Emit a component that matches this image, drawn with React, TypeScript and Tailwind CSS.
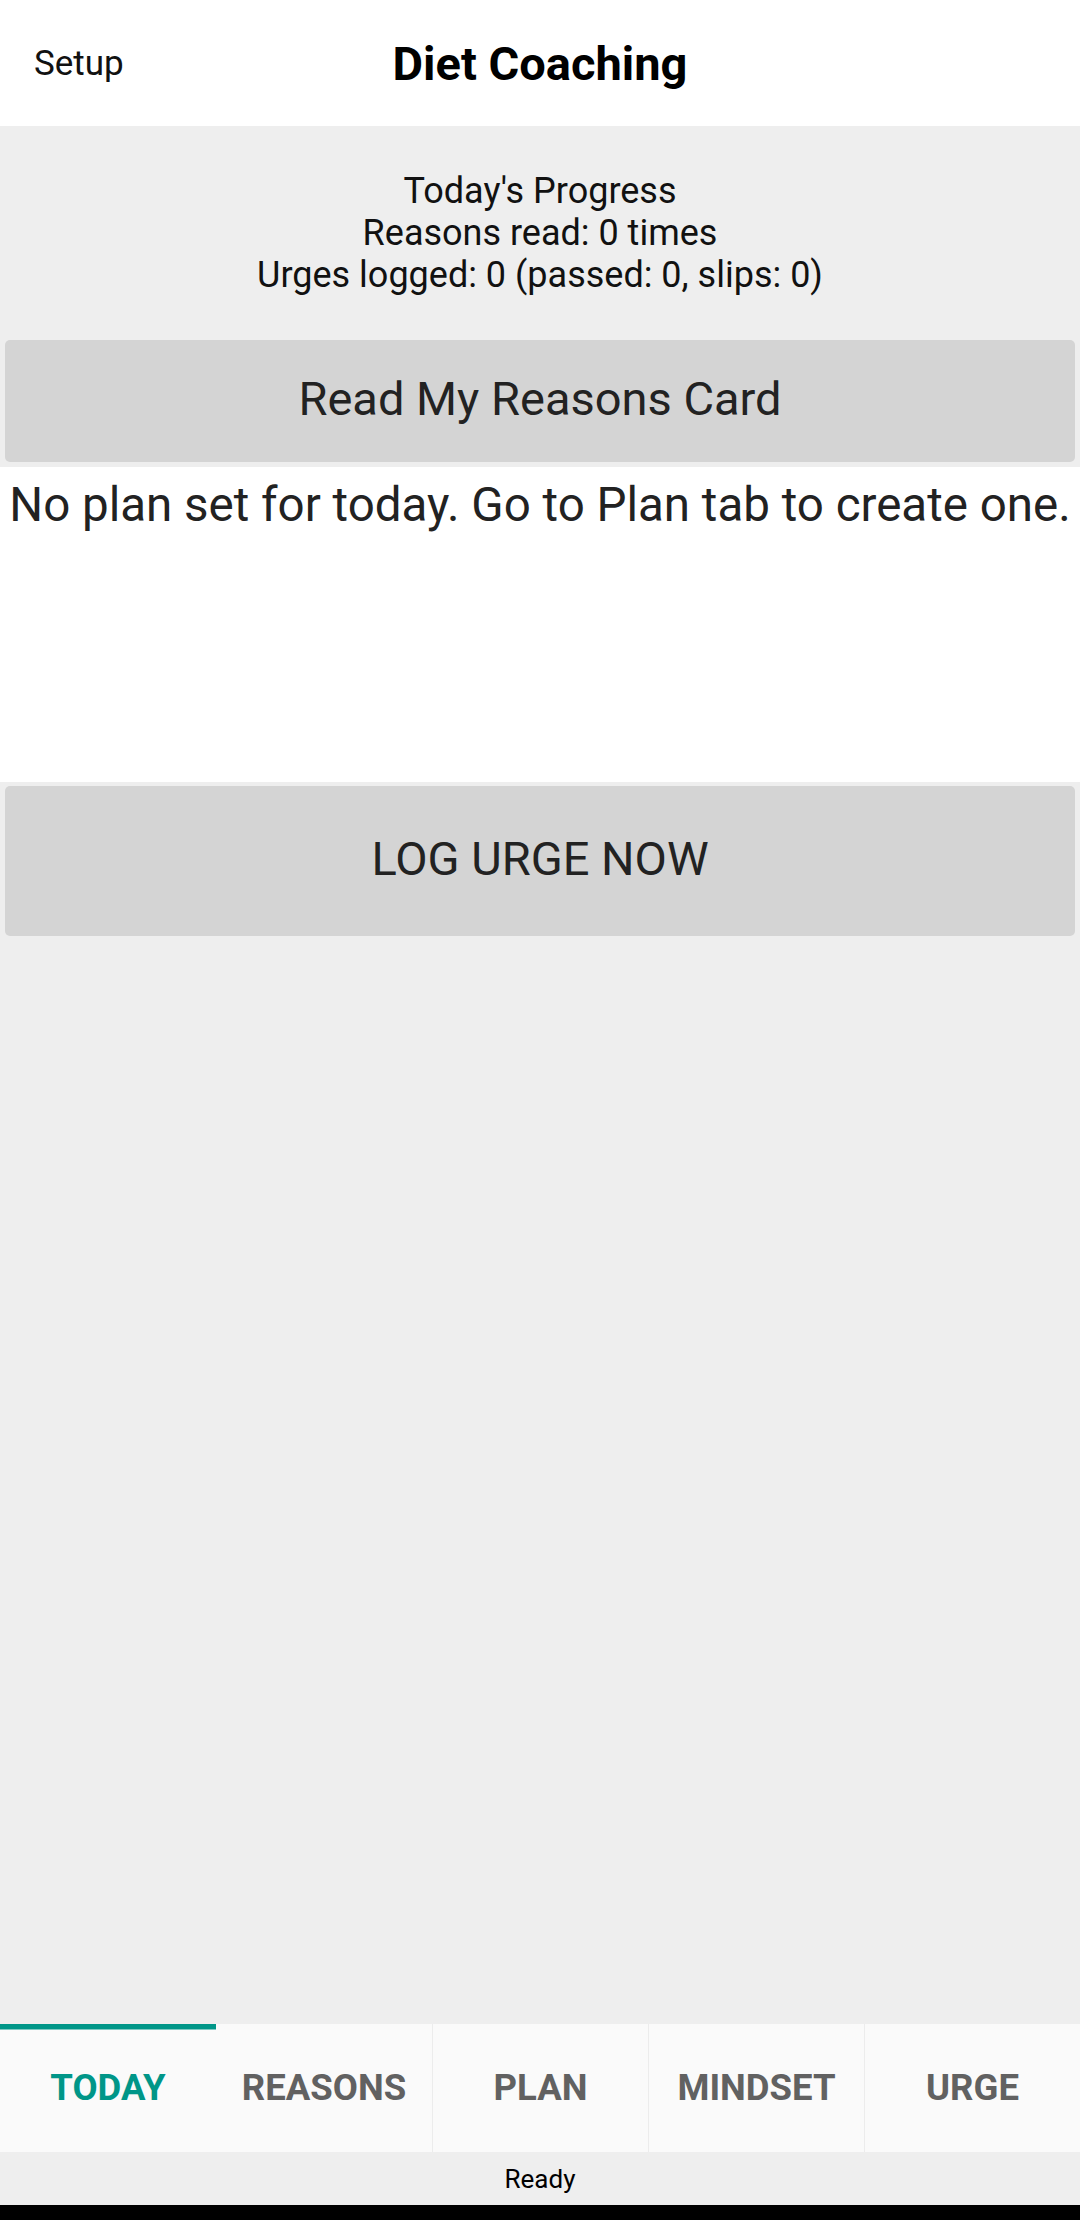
import React from "react";

const tabs = ["TODAY", "REASONS", "PLAN", "MINDSET", "URGE"];

export default function App() {
  return (
    <div className="flex h-[2220px] w-[1080px] flex-col overflow-hidden bg-[#eeeeee] font-['Roboto','Liberation_Sans',sans-serif]">
      {/* Header */}
      <header className="grid h-[126px] shrink-0 grid-cols-[1fr_auto_1fr] items-center bg-white">
        <div className="pl-[34px] text-[35px] leading-none text-[#111111]">Setup</div>
        <h1 className="text-[47px] font-bold leading-none text-black">Diet Coaching</h1>
        <div />
      </header>

      {/* Main */}
      <main className="flex flex-1 flex-col bg-[#eeeeee]">
        <section className="flex flex-col items-center pt-[44px] pb-[44px] text-[36px] leading-[42px] text-[#111111]">
          <p>Today's Progress</p>
          <p>Reasons read: 0 times</p>
          <p>Urges logged: 0 (passed: 0, slips: 0)</p>
        </section>

        <div className="px-[5px]">
          <button className="flex h-[122px] w-full items-center justify-center rounded-[5px] bg-[#d4d4d4] pb-[6px] text-[47px] leading-none text-[#222222]">
            Read My Reasons Card
          </button>
        </div>

        <div className="mt-[5px] h-[315px] bg-white pt-[10px] text-center text-[47.5px] leading-[56px] text-[#222222]">
          No plan set for today. Go to Plan tab to create one.
        </div>

        <div className="mt-[4px] px-[5px]">
          <button className="flex h-[150px] w-full items-center justify-center rounded-[5px] bg-[#d4d4d4] pb-[6px] text-[47px] leading-none text-[#222222]">
            LOG URGE NOW
          </button>
        </div>

        <div className="flex-1" />
      </main>

      {/* Tab bar */}
      <nav className="grid h-[128px] shrink-0 grid-cols-5 bg-[#fafafa]">
        {tabs.map((t, i) => (
          <div
            key={t}
            className={
              i === 0
                ? "relative flex items-center justify-center text-[36.5px] font-bold leading-none text-[#009688]"
                : i === 1
                ? "relative flex items-center justify-center text-[36.5px] font-bold leading-none text-[#616161]"
                : "relative flex items-center justify-center border-l border-[#ececec] text-[36.5px] font-bold leading-none text-[#616161]"
            }
          >
            {i === 0 && (
              <span className="absolute left-0 right-0 top-0 h-[5px] bg-[#009688] shadow-[0_1px_0_#7fcac3]" />
            )}
            {t}
          </div>
        ))}
      </nav>

      {/* Status */}
      <div className="flex h-[53px] shrink-0 items-center justify-center bg-[#eeeeee] text-[26px] leading-none text-black">
        Ready
      </div>
      <div className="h-[15px] shrink-0 bg-black" />
    </div>
  );
}
